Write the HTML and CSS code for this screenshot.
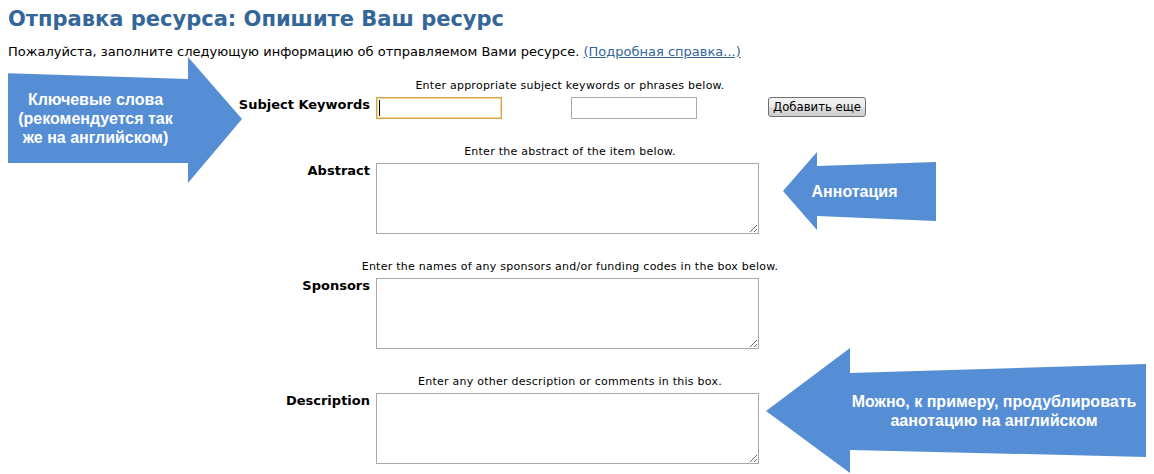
FILE: index.html
```html
<!DOCTYPE html>
<html lang="ru">
<head>
<meta charset="utf-8">
<title>Отправка ресурса: Опишите Ваш ресурс</title>
<link rel="stylesheet" href="styles.css">
</head>
<body>
<h1 class="title">Отправка ресурса: Опишите Ваш ресурс</h1>
<p class="intro">Пожалуйста, заполните следующую информацию об отправляемом Вами ресурсе. <a href="#" class="help">(Подробная справка...)</a></p>

<form class="form">
  <div class="section">
    <div class="hint-row"><span class="hint">Enter appropriate subject keywords or phrases below.</span></div>
    <label class="label" for="kw1">Subject Keywords</label>
    <div class="field keywords">
      <span class="focus-wrap"><input id="kw1" class="text focused" type="text"><span class="caret"></span></span>
      <input class="text second" type="text">
      <button type="button" class="btn">Добавить еще</button>
    </div>
  </div>

  <div class="section">
    <div class="hint-row"><span class="hint">Enter the abstract of the item below.</span></div>
    <label class="label" for="abs">Abstract</label>
    <div class="field"><textarea id="abs" class="area"></textarea></div>
  </div>

  <div class="section">
    <div class="hint-row"><span class="hint">Enter the names of any sponsors and/or funding codes in the box below.</span></div>
    <label class="label" for="spo">Sponsors</label>
    <div class="field"><textarea id="spo" class="area"></textarea></div>
  </div>

  <div class="section">
    <div class="hint-row"><span class="hint">Enter any other description or comments in this box.</span></div>
    <label class="label" for="desc">Description</label>
    <div class="field"><textarea id="desc" class="area"></textarea></div>
  </div>
</form>

<div class="callout callout-keywords">
  <svg class="arrow" viewBox="0 0 239 126" preserveAspectRatio="none"><polygon points="0,16 185,22 185,0 239,62 185,126 185,106 0,106"/></svg>
  <div class="callout-text">Ключевые слова<br>(рекомендуется так<br>же на английском)</div>
</div>

<div class="callout callout-abstract">
  <svg class="arrow" viewBox="0 0 153 78" preserveAspectRatio="none"><polygon points="0,39 34,0 34,14 153,10 153,69 34,64 34,78"/></svg>
  <div class="callout-text">Аннотация</div>
</div>

<div class="callout callout-desc">
  <svg class="arrow" viewBox="0 0 384 125" preserveAspectRatio="none"><polygon points="0,63 84,0 84,25 384,16 384,109 84,102 84,125"/></svg>
  <div class="callout-text">Можно, к примеру, продублировать<br>аанотацию на английском</div>
</div>
</body>
</html>
```

FILE: styles.css
```css
html {
  margin: 0;
  padding: 0;
  background: #fff;
  overflow: hidden;
}

body {
  position: relative;
  margin: 8px;
  font-family: "DejaVu Sans", sans-serif;
  color: #000;
}

.title {
  margin: 0;
  font-size: 21px;
  line-height: 22px;
  font-weight: bold;
  color: #336699;
}

.intro {
  margin: 14px 0 0;
  font-size: 13px;
  line-height: 16px;
}

.help {
  color: #336699;
  text-decoration: underline;
}

.form {
  margin-top: 18px;
}

.section {
  display: grid;
  grid-template-columns: 362px 388px;
  column-gap: 6px;
  row-gap: 3px;
  margin-bottom: 25px;
}

.hint-row {
  grid-column: 2;
  display: flex;
  justify-content: center;
  white-space: nowrap;
}

.hint {
  font-size: 11px;
  line-height: 16px;
  letter-spacing: 0.25px;
  color: #000;
}

.label {
  grid-column: 1;
  text-align: right;
  font-weight: bold;
  font-size: 13px;
  line-height: 15px;
}

.field {
  grid-column: 2;
}

.keywords {
  display: flex;
  align-items: flex-start;
}

.focus-wrap {
  position: relative;
  display: block;
}

.text {
  display: block;
  box-sizing: border-box;
  width: 126px;
  height: 22px;
  margin: 0;
  padding: 1px 3px;
  border: 1px solid #a9a9a9;
  background: #fff;
  font: 13px "DejaVu Sans", sans-serif;
  outline: none;
}

.focused {
  border: 1px solid #d9a548;
  box-shadow: 0 0 0 1px #f3d49a inset;
}

.caret {
  position: absolute;
  left: 3px;
  top: 3px;
  width: 1px;
  height: 16px;
  background: #000;
}

.second {
  margin-left: 69px;
}

.btn {
  box-sizing: border-box;
  margin-left: 71px;
  width: 100px;
  height: 20px;
  padding: 0 4px;
  border: 1px solid #707070;
  border-radius: 3px;
  background: linear-gradient(#f2f2f2 0%, #ebebeb 50%, #dddddd 51%, #cfcfcf 100%);
  font: 13px "DejaVu Sans Condensed", "DejaVu Sans", sans-serif;
  line-height: 16px;
  color: #000;
  white-space: nowrap;
}

.area {
  display: block;
  box-sizing: border-box;
  width: 383px;
  height: 71px;
  margin: 0;
  border: 1px solid #a9a9a9;
  background: #fff;
  resize: both;
  outline: none;
}

/* callouts (arrows drawn over the page) */
.callout {
  position: absolute;
  display: flex;
  align-items: center;
}

.arrow {
  position: absolute;
  left: 0;
  top: 0;
  width: 100%;
  height: 100%;
  fill: #558ed5;
}

.callout-text {
  position: relative;
  font-family: "Liberation Sans", Arial, sans-serif;
  font-weight: bold;
  font-size: 16px;
  line-height: 19px;
  color: #fff;
  text-align: center;
  white-space: nowrap;
}

.callout-keywords {
  left: -5px;
  top: 49px;
  width: 239px;
  height: 126px;
}

.callout-keywords .callout-text {
  width: 185px;
  margin-top: -4px;
}

.callout-abstract {
  left: 775px;
  top: 144px;
  width: 153px;
  height: 78px;
}

.callout-abstract .callout-text {
  width: 143px;
}

.callout-desc {
  left: 758px;
  top: 340px;
  width: 384px;
  height: 125px;
}

.callout-desc .callout-text {
  width: 300px;
  margin-left: 78px;
}
```
